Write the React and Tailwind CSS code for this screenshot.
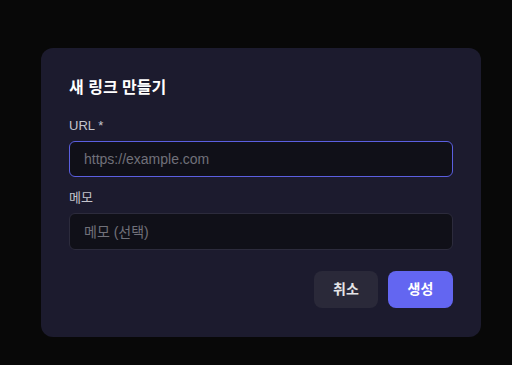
import React from 'react';

export default function App() {
  const font = { fontFamily: '"Liberation Sans", "Noto Sans CJK KR", sans-serif' };
  return (
    <div className="w-[512px] h-[365px] bg-[#080808] flex items-start justify-start pl-[41px] pt-[48px]" style={font}>
      <div className="w-[440px] rounded-[12px] bg-[#1c1b2e] px-7 pt-7 pb-[29px]">
        <h2 className="text-[16px] leading-[24px] font-bold text-white">새 링크 만들기</h2>

        <div className="mt-[17px]">
          <label className="block text-[13px] leading-[18px] text-[#c4c4cc]">URL *</label>
          <input
            className="mt-[6px] w-full h-[36px] rounded-[6px] bg-[#101018] border border-[#5b5fe0] px-[14px] text-[14px] text-white placeholder-[#71717a] outline-none"
            placeholder="https://example.com"
          />
        </div>

        <div className="mt-[12px]">
          <label className="block text-[13px] leading-[18px] text-[#c4c4cc]">메모</label>
          <input
            className="mt-[6px] w-full h-[37px] rounded-[6px] bg-[#101018] border border-[#2c2b3c] px-[14px] text-[14px] text-white placeholder-[#71717a] outline-none"
            placeholder="메모 (선택)"
          />
        </div>

        <div className="mt-[21px] flex justify-end gap-[10px]">
          <button className="w-[64px] h-[37px] rounded-[8px] bg-[#2a2939] text-[14px] font-semibold text-[#e4e4e7]">취소</button>
          <button className="w-[65px] h-[37px] rounded-[8px] bg-[#6366f1] text-[14px] font-semibold text-white">생성</button>
        </div>
      </div>
    </div>
  );
}
